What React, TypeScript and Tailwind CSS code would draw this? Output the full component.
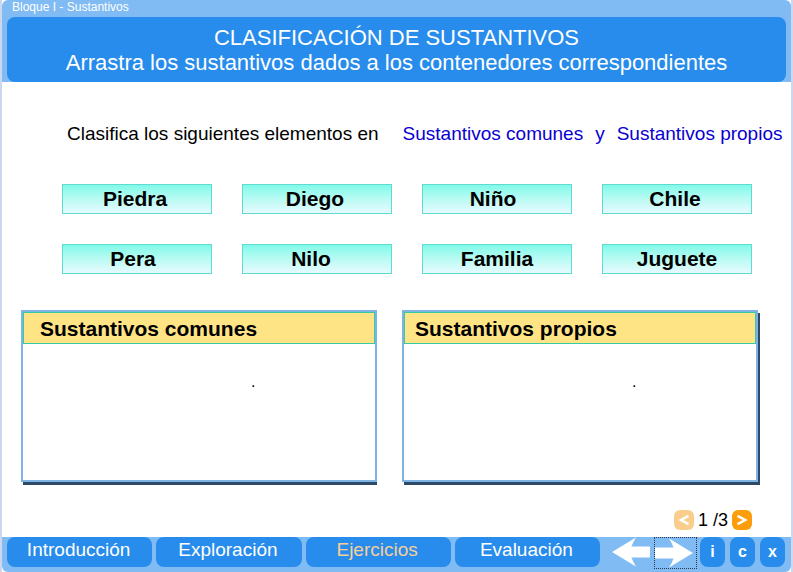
const words = [
  { label: 'Piedra', pad: 'pr-1' },
  { label: 'Diego', pad: 'pr-1' },
  { label: 'Niño', pad: 'pr-2' },
  { label: 'Chile', pad: 'pr-1' },
  { label: 'Pera', pad: 'pr-2' },
  { label: 'Nilo', pad: 'pr-3' },
  { label: 'Familia', pad: 'pr-0' },
  { label: 'Juguete', pad: 'pr-0' },
];

const sections = ['Introducción', 'Exploración', 'Ejercicios', 'Evaluación'];

function Arrow({ flip = false }: { flip?: boolean }) {
  return (
    <svg viewBox="0 0 38 30" className="h-[30px] w-[38px]" fill="#fff" aria-hidden="true">
      <path
        d={
          flip
            ? 'M38 15 L14 0.5 Q17 5 18.5 9.5 L0 9.5 L0 20.5 L18.5 20.5 Q17 25 14 29.5 Z'
            : 'M0 15 L24 0.5 Q21 5 19.5 9.5 L38 9.5 L38 20.5 L19.5 20.5 Q21 25 24 29.5 Z'
        }
      />
    </svg>
  );
}

function Chevron({ left = false }: { left?: boolean }) {
  return (
    <svg viewBox="0 0 20 20" className="size-5" fill="none" stroke="#fff" strokeWidth="2.5" aria-hidden="true">
      <path d={left ? 'M14.5 5.8 L7 10 L14.5 14.2' : 'M5.5 5.8 L13.2 10 L5.5 14.2'} />
    </svg>
  );
}

function DropBox({ title, headClass, boxClass }: { title: string; headClass: string; boxClass: string }) {
  return (
    <section className={`flex h-[172px] flex-col border-2 border-[#7db4e4] bg-white ${boxClass}`}>
      <h2
        className={`h-8 border border-[#35c9a5] bg-[#ffe486] text-[21px] leading-8 font-bold whitespace-nowrap ${headClass}`}
      >
        {title}
      </h2>
      <p className="pt-[26px] pl-[228px] text-base leading-6">.</p>
    </section>
  );
}

export default function App() {
  return (
    <div className="flex min-h-screen flex-col border-x-2 border-[#cbd8f0] bg-white font-['Liberation_Sans',Arial,sans-serif] text-black">
      <header className="rounded-t-md bg-[#80bbf4] px-[5px]">
        <p className="h-[17px] pl-[5px] text-[12px] leading-[14px] text-white">Bloque I - Sustantivos</p>
        <div className="rounded-lg bg-[#278ceb] pt-2 pb-[7px] text-center text-[22px] leading-[25px] text-white">
          <h1>CLASIFICACIÓN DE SUSTANTIVOS</h1>
          <p>Arrastra los sustantivos dados a los contenedores correspondientes</p>
        </div>
      </header>

      <main className="flex flex-1 flex-col">
        <p className="flex gap-6 pt-10 pl-[65px] text-[19px] leading-6 whitespace-nowrap">
          <span>Clasifica los siguientes elementos en</span>
          <span className="flex gap-3 text-[#0a00d2]">
            <span>Sustantivos comunes</span>
            <span>y</span>
            <span>Sustantivos propios</span>
          </span>
        </p>

        <div className="grid grid-cols-4 gap-[30px] pt-[38px] pr-[39px] pl-[60px]">
          {words.map((word) => (
            <button
              key={word.label}
              type="button"
              className={`h-[30px] border border-[#5fdccf] bg-linear-to-b from-[#7ffae9] to-[#e6fafe] text-center text-[21px] leading-7 font-bold ${word.pad}`}
            >
              {word.label}
            </button>
          ))}
        </div>

        <div className="grid grid-cols-2 gap-[25px] pt-9 pr-[33px] pl-[19px]">
          <DropBox
            title="Sustantivos comunes"
            headClass="pl-4"
            boxClass="shadow-[1px_3px_0_-1px_#2f4a68,1px_4px_0_-1px_#2f4a68]"
          />
          <DropBox title="Sustantivos propios" headClass="pl-[10px]" boxClass="shadow-[2px_3px_0_0_#2f4a68]" />
        </div>

        <nav aria-label="Páginas" className="mt-auto flex items-center justify-end gap-1 pr-[39px] pb-[7px]">
          <button type="button" aria-label="Anterior" className="size-5 rounded-md bg-[#f9cd8b]">
            <Chevron left />
          </button>
          <span className="min-w-[30px] text-center text-[18px] leading-5 whitespace-nowrap">1 /3</span>
          <button type="button" aria-label="Siguiente" className="size-5 rounded-md bg-[#fc9d0c]">
            <Chevron />
          </button>
        </nav>
      </main>

      <footer className="flex h-[35px] items-start rounded-b-md bg-[#80bbf4] pr-[6px] pl-[5px]">
        <nav aria-label="Secciones" className="flex flex-1 gap-1">
          {sections.map((name) => (
            <button
              key={name}
              type="button"
              className={`h-[30px] flex-1 rounded-lg bg-[#278ceb] pr-0.5 pb-1 text-[19px] leading-6 ${
                name === 'Ejercicios' ? 'text-[#f6cf9a]' : 'text-white'
              }`}
            >
              {name}
            </button>
          ))}
        </nav>
        <div className="flex gap-1 pl-3">
          <button type="button" aria-label="Atrás" className="h-[30px]">
            <Arrow />
          </button>
          <button
            type="button"
            aria-label="Adelante"
            className="h-8 w-[43px] border border-dotted border-[#2a3a4c]"
          >
            <Arrow flip />
          </button>
        </div>
        <div className="flex gap-[5px] pl-[3px]">
          {['i', 'c', 'x'].map((key) => (
            <button
              key={key}
              type="button"
              className="h-[30px] w-[25px] rounded-lg bg-[#278ceb] text-[16px] leading-6 font-bold text-white"
            >
              {key}
            </button>
          ))}
        </div>
      </footer>
    </div>
  );
}
